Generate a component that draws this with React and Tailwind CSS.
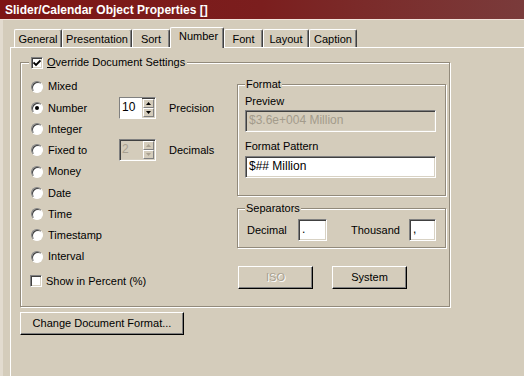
import React from 'react';

const BG = 'bg-[#d4ccbb]';

const tabs = [
  { label: 'General', w: 'w-[48px]' },
  { label: 'Presentation', w: 'w-[70px]' },
  { label: 'Sort', w: 'w-[38px]' },
  { label: 'Number', w: 'w-[54px]', active: true },
  { label: 'Font', w: 'w-[39px]' },
  { label: 'Layout', w: 'w-[46px]' },
  { label: 'Caption', w: 'w-[48px]' }
];

const sunken =
  'border border-t-[#808080] border-l-[#808080] border-b-white border-r-white shadow-[inset_1px_1px_0_#404040,inset_-1px_-1px_0_#d8d2c4]';

const raised =
  'border border-t-white border-l-white border-b-black border-r-black shadow-[inset_-1px_-1px_0_#808080]';

function Tab({ label, w, active }) {
  return (
    <div
      className={`flex items-center justify-center rounded-t-[2px] border-l border-t border-r border-l-white border-t-white border-r-[#404040] shadow-[inset_-1px_0_0_#808080] ${w} ${
        active ? `relative z-10 -mb-px h-[21px] pb-[3px] pl-[3px] ${BG}` : 'h-[18px] pt-[1px]'
      }`}
    >
      {label}
    </div>
  );
}

function Radio({ checked }) {
  return (
    <span className="flex h-[12px] w-[12px] shrink-0 items-center justify-center rounded-full border border-t-[#808080] border-l-[#808080] border-b-white border-r-white bg-white shadow-[inset_1px_1px_0_#404040]">
      {checked && <span className="h-[4px] w-[4px] rounded-full bg-black" />}
    </span>
  );
}

function Check({ checked }) {
  return (
    <span className={`flex h-[12px] w-[12px] shrink-0 items-center justify-center bg-white ${sunken}`}>
      {checked && (
        <svg width="8" height="8" viewBox="0 0 8 8">
          <path d="M0.5 3.5 L3 6 L7.5 1.5" fill="none" stroke="#000" strokeWidth="1.8" />
        </svg>
      )}
    </span>
  );
}

function Arrow({ up, disabled }) {
  return (
    <svg width="5" height="3" viewBox="0 0 5 3">
      <path d={up ? 'M2.5 0 L5 3 L0 3 Z' : 'M0 0 L5 0 L2.5 3 Z'} fill={disabled ? '#a8a090' : '#000'} />
    </svg>
  );
}

function Spinner({ value, disabled }) {
  return (
    <div className={`flex h-[22px] w-[37px] ${sunken}`}>
      <div
        className={`flex-1 pl-[2px] text-[12px] leading-[18px] ${
          disabled ? 'text-[#a8a090]' : 'bg-white text-black'
        }`}
      >
        {value}
      </div>
      <div className="flex w-[13px] flex-col p-px">
        <div className="flex flex-1 items-center justify-center border border-t-white border-l-white border-b-[#808080] border-r-[#808080]">
          <Arrow up disabled={disabled} />
        </div>
        <div className="flex flex-1 items-center justify-center border border-t-white border-l-white border-b-[#808080] border-r-[#808080]">
          <Arrow disabled={disabled} />
        </div>
      </div>
    </div>
  );
}

function Btn({ children, w, disabled }) {
  return (
    <div
      className={`flex h-[23px] items-center justify-center ${w} ${raised} ${
        disabled ? 'text-[#a8a090] [text-shadow:1px_1px_0_#fff]' : ''
      }`}
    >
      {children}
    </div>
  );
}

const etched =
  'border border-[#928a7b] shadow-[inset_1px_1px_0_#fff,1px_1px_0_#fff]';

const formats = ['Mixed', 'Number', 'Integer', 'Fixed to', 'Money', 'Date', 'Time', 'Timestamp', 'Interval'];

export default function App() {
  return (
    <div className={`flex h-[376px] w-[524px] flex-col overflow-hidden ${BG} font-['Liberation_Sans',Arial,sans-serif] text-[11px] text-black`}>
      <div className="flex h-[19px] shrink-0 items-center bg-gradient-to-r from-[#7d1414] via-[#7b1e1e] to-[#7a3b3b] pl-[5px] text-[12px] font-bold text-white">
        Slider/Calendar Object Properties []
      </div>
      <div className="h-px shrink-0 bg-[#f2e2da]" />

      <div className="flex flex-1 flex-col border-l-[3px] border-[#e2dbcf]">
        <div className="flex h-[27px] shrink-0 items-end pl-[11px]">
          {tabs.map((t) => (
            <Tab key={t.label} {...t} />
          ))}
        </div>

        <div className="ml-[7px] flex-1 border-l border-t border-white pl-[9px] pt-[8px]">
          <fieldset className={`box-border h-[251px] w-[430px] pl-[8px] pt-[7px] ${etched}`}>
            <legend className={`flex h-[13px] items-center px-[2px] ${BG}`}>
              <Check checked />
              <span className="ml-[4px]">
                <span className="underline">O</span>verride Document Settings
              </span>
            </legend>

            <div className="flex">
              <div className="ml-[2px] w-[206px]">
                {formats.map((f) => (
                  <div key={f} className="flex h-[21.25px] items-center">
                    <Radio checked={f === 'Number'} />
                    <span className="ml-[5px] w-[71px]">{f}</span>
                    {f === 'Number' && (
                      <>
                        <Spinner value="10" />
                        <span className="ml-[13px]">Precision</span>
                      </>
                    )}
                    {f === 'Fixed to' && (
                      <>
                        <Spinner value="2" disabled />
                        <span className="ml-[13px]">Decimals</span>
                      </>
                    )}
                  </div>
                ))}
                <div className="-ml-px mt-[7px] flex h-[13px] items-center">
                  <Check />
                  <span className="ml-[4px]">Show in Percent (%)</span>
                </div>
              </div>

              <div className="mt-[2px] w-[209px]">
                <fieldset className={`px-[7px] pb-[17px] ${etched}`}>
                  <legend className={`h-[13px] px-[1px] leading-[13px] ${BG}`}>Format</legend>
                  <div className="mt-[4px] h-[13px] leading-[13px]">Preview</div>
                  <div className={`mt-[2px] h-[22px] w-[191px] pl-[3px] text-[12px] leading-[19px] text-[#a39b8b] ${sunken}`}>
                    $3.6e+004 Million
                  </div>
                  <div className="mt-[8px] h-[13px] leading-[13px]">Format Pattern</div>
                  <div className={`mt-[3px] h-[22px] w-[191px] bg-white pl-[3px] text-[12px] leading-[19px] ${sunken}`}>
                    $## Million
                  </div>
                </fieldset>

                <fieldset className={`mt-[6px] px-[7px] pb-[6px] ${etched}`}>
                  <legend className={`h-[13px] px-[1px] leading-[13px] ${BG}`}>Separators</legend>
                  <div className="mt-[4px] flex h-[22px] items-center">
                    <span className="ml-[2px] w-[51px]">Decimal</span>
                    <div className={`h-[22px] w-[29px] bg-white pl-[3px] text-[12px] leading-[18px] ${sunken}`}>.</div>
                    <span className="ml-[24px] w-[58px]">Thousand</span>
                    <div className={`h-[22px] w-[27px] bg-white pl-[3px] text-[12px] leading-[18px] ${sunken}`}>,</div>
                  </div>
                </fieldset>

                <div className="mt-[18px] flex gap-[19px] pl-[1px]">
                  <Btn w="w-[75px]" disabled>
                    ISO
                  </Btn>
                  <Btn w="w-[75px]">System</Btn>
                </div>
              </div>
            </div>
          </fieldset>

          <div className="mt-[5px]">
            <Btn w="w-[164px]">Change Document Format...</Btn>
          </div>
        </div>
      </div>
    </div>
  );
}
